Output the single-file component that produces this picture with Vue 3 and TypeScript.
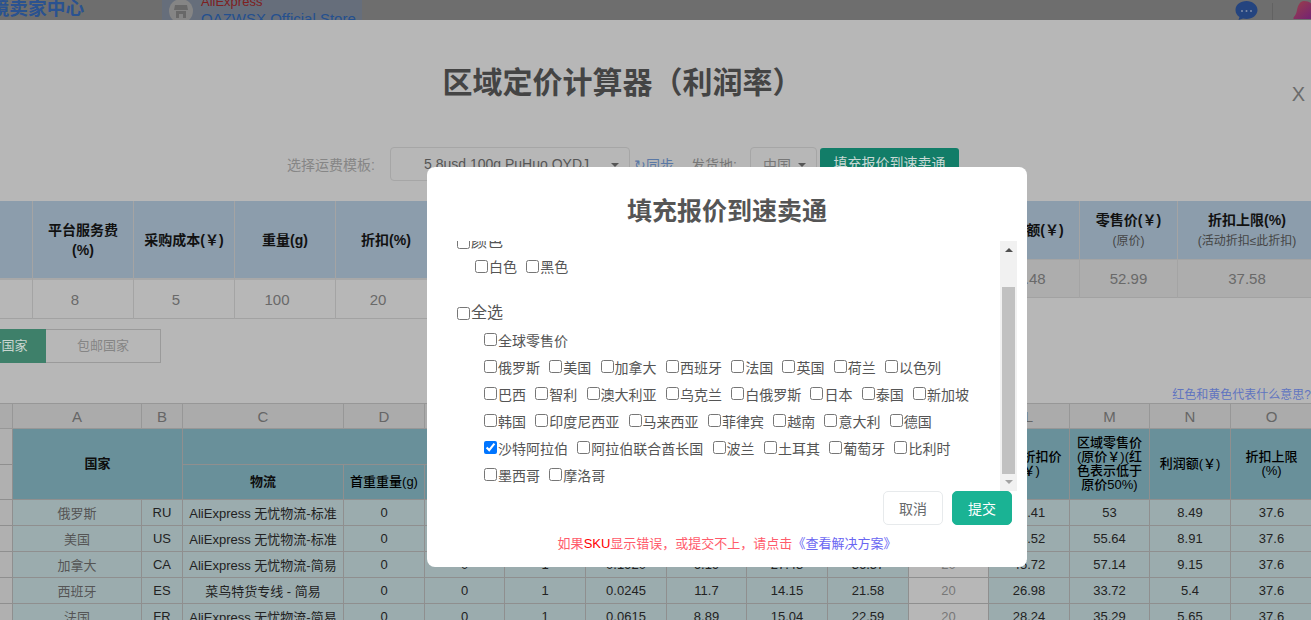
<script setup lang="ts">
interface Row { name: string; code: string; ship: string; vals: string[]; }
const priceRows: Row[] = [
  { name: '俄罗斯', code: 'RU', ship: 'AliExpress 无忧物流-标准', vals: ['0','0','1','0.1500','7.2','25.2','33.96','20','42.41','53','8.49','37.6'] },
  { name: '美国', code: 'US', ship: 'AliExpress 无忧物流-标准', vals: ['0','0','1','0.1700','7.6','26.4','35.6','20','44.52','55.64','8.91','37.6'] },
  { name: '加拿大', code: 'CA', ship: 'AliExpress 无忧物流-简易', vals: ['0','0','1','0.1920','6.19','27.43','36.57','20','45.72','57.14','9.15','37.6'] },
  { name: '西班牙', code: 'ES', ship: '菜鸟特货专线 - 简易', vals: ['0','0','1','0.0245','11.7','14.15','21.58','20','26.98','33.72','5.4','37.6'] },
  { name: '法国', code: 'FR', ship: 'AliExpress 无忧物流-简易', vals: ['0','0','1','0.0615','8.89','15.04','22.59','20','28.24','35.29','5.65','37.6'] },
];
const letters = ['A','B','C','D','E','F','G','H','I','J','K','L','M','N','O'];
const widths = [13,129,41,161,81,80,81,81,80,81,81,80,81,80,81,82];
const countryRows: string[][] = [
  ['俄罗斯','美国','加拿大','西班牙','法国','英国','荷兰','以色列'],
  ['巴西','智利','澳大利亚','乌克兰','白俄罗斯','日本','泰国','新加坡'],
  ['韩国','印度尼西亚','马来西亚','菲律宾','越南','意大利','德国'],
  ['沙特阿拉伯','阿拉伯联合酋长国','波兰','土耳其','葡萄牙','比利时'],
  ['墨西哥','摩洛哥'],
];
</script>

<template>
  <div class="page">
    <header class="topbar">
      <div class="brand">跨境卖家中心</div>
      <div class="shop">
        <svg class="avatar" width="24" height="24" viewBox="0 0 24 24">
          <circle cx="12" cy="12" r="12" fill="#858585" />
          <path d="M6 6h12l1 5H5z M7 12h10v7h-3v-4h-4v4H7z" fill="#686868" />
        </svg>
        <div class="shop-text">
          <div class="shop-ae">AliExpress</div>
          <div class="shop-name">QAZWSX Official Store</div>
        </div>
      </div>
      <svg class="chat" width="23" height="20" viewBox="0 0 23 20">
        <path d="M11.5 1C5.5 1 .5 4.500 .5 10c0 3 1.500 5.500 4 7l-1 3 4.500-1.500c1 .3 2.300.5 3.500.5 6 0 11-4 11-9S17.500 1 11.500 1z" fill="#24447f" />
        <circle cx="7" cy="11" r="1" fill="#7f8da8" /><circle cx="11.500" cy="11" r="1" fill="#7f8da8" /><circle cx="16" cy="11" r="1" fill="#7f8da8" />
      </svg>
      <div class="sep"></div>
      <svg class="bell" width="22" height="20" viewBox="0 0 22 20">
        <defs><linearGradient id="bellg" x1="0" y1="0" x2="1" y2="1"><stop offset="0" stop-color="#9c4048" /><stop offset="1" stop-color="#702078" /></linearGradient></defs>
        <path d="M11 1c-4 0-6 4-7 9-.4 3-1.500 5-3.500 7.500V19H22v-9C21 5 17 1 11 1z" fill="url(#bellg)" />
      </svg>
    </header>

    <main class="panel">
      <div class="close">X</div>
      <h1 class="title">区域定价计算器（利润率）</h1>
      <div class="toolbar">
        <span class="tool-label">选择运费模板:</span>
        <div class="select tpl"><span>5.8usd 100g PuHuo QYDJ</span><i class="caret"></i></div>
        <span class="sync">↻同步</span>
        <span class="tool-label ship-from">发货地:</span>
        <div class="select origin"><span>中国</span><i class="caret"></i></div>
        <div class="fill-btn">填充报价到速卖通</div>
      </div>

      <div class="summary">
        <div class="sum-left">
          <div class="sum-col c0"><div class="sum-h"></div><div class="sum-v"></div></div>
          <div class="sum-col"><div class="sum-h">平台服务费<br />(%)</div><div class="sum-v">8</div></div>
          <div class="sum-col"><div class="sum-h">采购成本(￥)</div><div class="sum-v">5</div></div>
          <div class="sum-col"><div class="sum-h">重量(g)</div><div class="sum-v">100</div></div>
          <div class="sum-col"><div class="sum-h">折扣(%)</div><div class="sum-v">20</div></div>
        </div>
        <div class="sum-right">
          <div class="sum-col r0"><div class="sum-h">利润额(￥)</div><div class="sum-v">8.48</div></div>
          <div class="sum-col r1"><div class="sum-h">零售价(￥)<small>(原价)</small></div><div class="sum-v">52.99</div></div>
          <div class="sum-col r2"><div class="sum-h">折扣上限(%)<small>(活动折扣≤此折扣)</small></div><div class="sum-v">37.58</div></div>
        </div>
      </div>

      <div class="tabs">
        <div class="tab on">买家支付国家</div>
        <div class="tab">包邮国家</div>
      </div>
      <div class="hint">红色和黄色代表什么意思?</div>

      <table class="sheet">
        <colgroup><col v-for="(w, i) in widths" :key="i" :style="{ width: w + 'px' }" /></colgroup>
        <thead>
          <tr class="letters">
            <th></th>
            <th v-for="l in letters" :key="l">{{ l }}</th>
          </tr>
          <tr class="h1">
            <td class="rn"></td>
            <th class="teal" colspan="2" rowspan="2">国家</th>
            <th class="teal" colspan="9"></th>
            <th class="teal thin" rowspan="2">区域折扣价<br />(￥)</th>
            <th class="teal thin" rowspan="2">区域零售价<br />(原价￥)(红<br />色表示低于<br />原价50%)</th>
            <th class="teal thin" rowspan="2">利润额(￥)</th>
            <th class="teal thin" rowspan="2">折扣上限<br />(%)</th>
          </tr>
          <tr class="h2">
            <td class="rn"></td>
            <th class="teal">物流</th>
            <th class="teal thin">首重重量(g)</th>
            <th class="teal" colspan="7"></th>
          </tr>
        </thead>
        <tbody>
          <tr v-for="r in priceRows" :key="r.code" class="data">
            <td class="rn"></td>
            <td class="tint cjk">{{ r.name }}</td>
            <td class="tint">{{ r.code }}</td>
            <td class="tint">{{ r.ship }}</td>
            <td v-for="(v, i) in r.vals" :key="i" :class="i === 7 ? 'plain' : 'tint'">{{ v }}</td>
          </tr>
        </tbody>
      </table>
    </main>

    <section class="modal">
      <h2 class="modal-title">填充报价到速卖通</h2>
      <div class="modal-body">
        <div class="list">
          <label class="group color-head"><input type="checkbox" />颜色</label>
          <div class="line colors">
            <label><input type="checkbox" />白色</label>
            <label><input type="checkbox" />黑色</label>
          </div>
          <label class="group all"><input type="checkbox" />全选</label>
          <div class="line regions"><label><input type="checkbox" />全球零售价</label></div>
          <div v-for="(row, ri) in countryRows" :key="ri" class="line regions">
            <label v-for="c in row" :key="c"><input type="checkbox" :checked="c === '沙特阿拉伯'" />{{ c }}</label>
          </div>
        </div>
        <div class="scrollbar">
          <i class="arrow up"></i>
          <div class="thumb"></div>
          <i class="arrow down"></i>
        </div>
      </div>
      <div class="actions">
        <button class="btn cancel">取消</button>
        <button class="btn submit">提交</button>
      </div>
      <p class="notice">如果<b>SKU</b>显示错误，或提交不上，请点击<a>《查看解决方案》</a></p>
    </section>
  </div>
</template>

<style>
html, body { margin: 0; background: #b7b7b7; }
</style>

<style scoped>
.page {
  position: relative;
  width: 1311px;
  height: 620px;
  overflow: hidden;
  background: #b7b7b7;
  font-family: "Liberation Sans", "Noto Sans CJK SC", sans-serif;
  font-size: 14px;
  color: #666;
}
.topbar {
  display: flex;
  height: 20px;
  overflow: hidden;
  background: #6e6e6e;
}
.brand {
  margin-left: -28px;
  width: 190px;
  flex: none;
  font-size: 18.7px;
  line-height: 17px;
  font-weight: 700;
  color: #2a5290;
}
.shop {
  display: flex;
  flex: none;
  width: 200px;
  height: 40px;
  margin-top: -8px;
  padding-left: 7px;
  box-sizing: border-box;
  gap: 8px;
  background: #666e7b;
}
.avatar { margin-top: 7px; flex: none; }
.shop-ae { color: #7e2020; font-size: 13px; line-height: 16px; margin-top: 2px; }
.shop-name { color: #24508f; font-size: 15px; line-height: 18px; margin-top: 0; white-space: nowrap; }
.chat { margin-left: 873px; flex: none; }
.sep { width: 1px; height: 20px; margin: 3px 0 0 14px; background: #626262; flex: none; }
.bell { margin-left: 20px; flex: none; }

.panel { position: relative; height: 600px; }
.close {
  position: absolute;
  top: 62px;
  right: 6px;
  font-size: 20px;
  line-height: 24px;
  color: #6b6b6b;
}
.title {
  margin: 0;
  padding: 42px 66px 0 0;
  height: 42px;
  line-height: 42px;
  text-align: center;
  font-size: 30px;
  font-weight: 700;
  color: #444;
}
.toolbar {
  display: flex;
  align-items: center;
  height: 34px;
  margin-top: 43px;
  padding-left: 287px;
  white-space: nowrap;
}
.tool-label { color: #868686; width: 103px; flex: none; }
.ship-from { width: 59px; margin-left: 16px; color: #777; }
.select {
  box-sizing: border-box;
  height: 34px;
  border: 1px solid #a6a6a6;
  border-radius: 4px;
  display: flex;
  align-items: center;
  color: #555;
  position: relative;
}
.tpl { width: 240px; padding-left: 33px; }
.origin { width: 67px; padding-left: 12px; color: #777; }
.caret {
  position: absolute;
  right: 10px;
  top: 15px;
  border: 4px solid transparent;
  border-top-color: #555;
}
.sync { width: 41px; margin-left: 4px; color: #5a78a5; flex: none; }
.fill-btn {
  margin-left: 3px;
  width: 139px;
  height: 32px;
  line-height: 30px;
  text-align: center;
  border-radius: 3px;
  background: #127d68;
  color: #c8d8d4;
}

.summary {
  display: flex;
  justify-content: space-between;
  align-items: flex-start;
  margin-top: 20px;
}
.sum-left, .sum-right { display: flex; }
.sum-right { margin-right: -5px; }
.sum-col { width: 101px; box-sizing: border-box; border-right: 1px solid #a4a4a4; }
.c0 { width: 33px; }
.sum-h {
  display: flex;
  flex-direction: column;
  align-items: center;
  justify-content: center;
  text-align: center;
  background: #8c9dac;
  color: #111;
  font-weight: 700;
  line-height: 20px;
  white-space: nowrap;
  box-sizing: border-box;
}
.sum-h small { font-size: 12px; font-weight: 400; color: #444; margin-top: 2px; line-height: 18px; }
.sum-v {
  font-size: 15px;
  text-align: center;
  color: #696969;
  box-sizing: border-box;
}
.sum-left .sum-h { height: 77px; }
.sum-left .sum-v {
  height: 41px;
  line-height: 40px;
  padding-right: 16px;
  border-top: 2px solid #a8a8a8;
  border-bottom: 1px solid #a2a2a2;
}
.sum-right .sum-h { height: 58px; }
.sum-right .sum-v {
  height: 39px;
  line-height: 38px;
  background: #adadad;
  border-top: 1px solid #a4a4a4;
  border-bottom: 1px solid #a2a2a2;
}
.sum-right .sum-col { border-right: 0; border-left: 1px solid #a4a4a4; }
.r0 { width: 79px; }
.r0 .sum-h, .r0 .sum-v { padding-right: 18px; }
.r1 { width: 98px; }
.r2 { width: 139px; }

.tabs { display: flex; margin-top: 10px; margin-left: -68px; }
.tab {
  box-sizing: border-box;
  width: 115px;
  height: 34px;
  line-height: 32px;
  text-align: center;
  font-size: 13px;
  color: #858585;
  border: 1px solid #9a9a9a;
  border-left: 0;
}
.tab.on { width: 114px; background: #3e806a; color: #c9d6d1; border-color: #3e806a; }
.hint {
  margin-top: 23px;
  height: 16px;
  line-height: 18px;
  font-size: 12px;
  text-align: right;
  color: #5f74c0;
  white-space: nowrap;
}

.sheet {
  table-layout: fixed;
  border-collapse: collapse;
  width: 1312px;
  margin: 1px 0 0 -1px;
  font-size: 13px;
  color: #222;
}
.sheet th, .sheet td {
  border: 1px solid #8f8f8f;
  padding: 0;
  text-align: center;
  overflow: hidden;
}
.letters th {
  height: 24px;
  background: #ababab;
  color: #666;
  font-size: 15px;
  font-weight: 400;
  border-color: #979797;
}
.rn { background: #b0b0b0; }
.h1 { height: 36px; }
.h2 { height: 35px; }
.teal {
  background: #69909a;
  color: #0d0d0d;
  font-size: 13px;
  line-height: 14px;
  font-weight: 700;
}
.teal.thin { font-weight: 500; color: #000; }
.data { height: 26px; white-space: nowrap; }
.tint { background: #9bacae; }
.cjk { color: #555; }
.plain { background: #b7b7b7; color: #777; }

.modal {
  position: absolute;
  left: 427px;
  top: 167px;
  width: 600px;
  height: 400px;
  background: #fff;
  border-radius: 8px;
  overflow: hidden;
  color: #555;
}
.modal-title {
  margin: 0;
  height: 74px;
  line-height: 88px;
  text-align: center;
  font-size: 25px;
  font-weight: 700;
  color: #555;
}
.modal-body { display: flex; height: 250px; padding-left: 30px; }
.list { flex: 1; overflow: hidden; }
.list label { display: inline-flex; align-items: center; white-space: nowrap; }
.list input { margin: 0 1px 0 0; width: 13px; height: 13px; flex: none; }
.list > .group { display: flex; font-size: 16px; line-height: 24px; }
.list > .color-head { margin-top: -11px; }
.line { display: flex; gap: 9.3px; height: 27px; align-items: center; }
.colors { padding-left: 18px; height: 24px; }
.list > .all { margin: 23px 0 1px; }
.regions { padding-left: 27px; }
.scrollbar {
  position: relative;
  width: 17px;
  margin-right: 10px;
  background: #f1f1f1;
  flex: none;
}
.thumb {
  position: absolute;
  left: 2px;
  top: 46px;
  width: 13px;
  height: 187px;
  background: #c1c1c1;
}
.arrow { position: absolute; left: 5px; border: 4px solid transparent; }
.up { top: 7px; border-bottom: 4px solid #505050; border-top-width: 0; }
.down { bottom: 7px; border-top: 4px solid #a3a3a3; border-bottom-width: 0; }

.actions { display: flex; justify-content: flex-end; gap: 9px; padding-right: 15px; }
.btn {
  box-sizing: border-box;
  width: 60px;
  height: 34px;
  border-radius: 5px;
  font: inherit;
  padding: 0;
}
.cancel { background: #fff; border: 1px solid #e7eaec; color: #676a6c; }
.submit { background: #1ab394; border: 1px solid #1ab394; color: #fff; }
.notice {
  margin: 10px 0 0;
  font-size: 13px;
  line-height: 18px;
  text-align: center;
  color: #ff5b6b;
  white-space: nowrap;
}
.notice b { font-weight: 400; color: #f00; }
.notice a { color: #6a66f2; }
</style>
